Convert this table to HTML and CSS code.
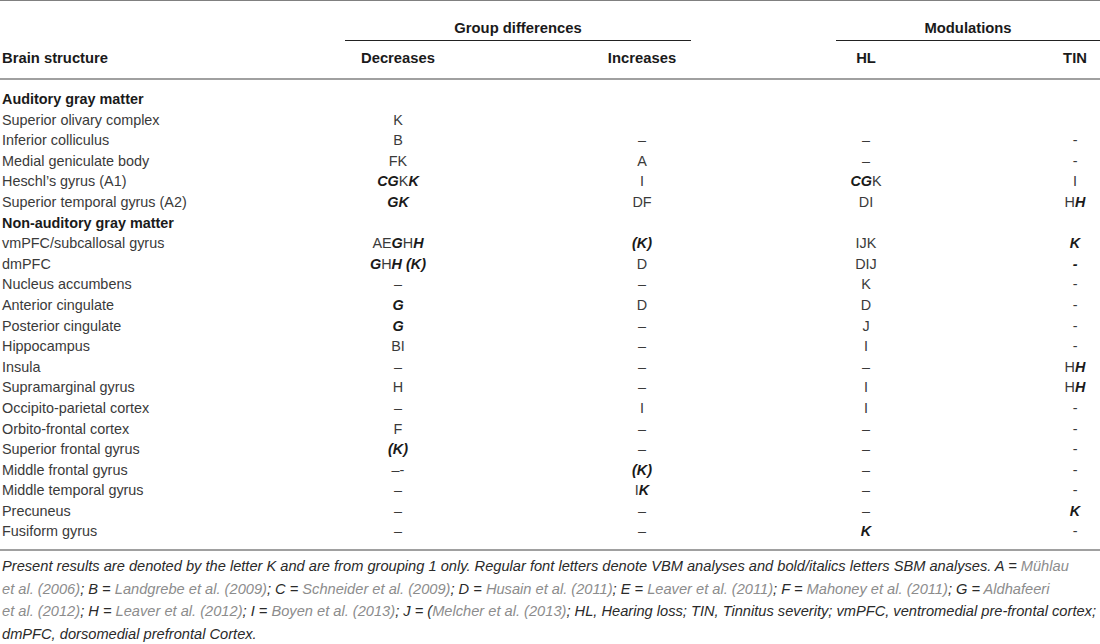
FILE: index.html
```html
<!DOCTYPE html>
<html lang="en">
<head>
    <meta charset="UTF-8">
    <title>Brain structure table</title>
    <link rel="stylesheet" href="styles.css">
</head>
<body>
    <table class="data">
        <colgroup>
            <col class="c-name">
            <col class="c-dec">
            <col class="c-inc">
            <col class="c-hl">
            <col class="c-tin">
        </colgroup>
        <thead>
            <tr class="group-row">
                <th></th>
                <th colspan="2" class="group"><div class="span-line">Group differences</div></th>
                <th colspan="2" class="group mod"><div class="span-line">Modulations</div></th>
            </tr>
            <tr class="head-row">
                <th class="name">Brain structure</th>
                <th class="dec">Decreases</th>
                <th class="inc">Increases</th>
                <th class="hl">HL</th>
                <th class="tin">TIN</th>
            </tr>
        </thead>
        <tbody>
            <tr class="section first"><td colspan="5">Auditory gray matter</td></tr>
            <tr><td>Superior olivary complex</td><td class="dec">K</td><td class="inc"></td><td class="hl"></td><td class="tin"></td></tr>
            <tr><td>Inferior colliculus</td><td class="dec">B</td><td class="inc">–</td><td class="hl">–</td><td class="tin">-</td></tr>
            <tr><td>Medial geniculate body</td><td class="dec">FK</td><td class="inc">A</td><td class="hl">–</td><td class="tin">-</td></tr>
            <tr><td>Heschl’s gyrus (A1)</td><td class="dec"><b>CG</b>K<b>K</b></td><td class="inc">I</td><td class="hl"><b>CG</b>K</td><td class="tin">I</td></tr>
            <tr><td>Superior temporal gyrus (A2)</td><td class="dec"><b>GK</b></td><td class="inc">DF</td><td class="hl">DI</td><td class="tin">H<b>H</b></td></tr>
            <tr class="section"><td colspan="5">Non-auditory gray matter</td></tr>
            <tr><td>vmPFC/subcallosal gyrus</td><td class="dec">AE<b>G</b>H<b>H</b></td><td class="inc"><b>(K)</b></td><td class="hl">IJK</td><td class="tin"><b>K</b></td></tr>
            <tr><td>dmPFC</td><td class="dec"><b>G</b>H<b>H (K)</b></td><td class="inc">D</td><td class="hl">DIJ</td><td class="tin"><strong>-</strong></td></tr>
            <tr><td>Nucleus accumbens</td><td class="dec">–</td><td class="inc">–</td><td class="hl">K</td><td class="tin">-</td></tr>
            <tr><td>Anterior cingulate</td><td class="dec"><b>G</b></td><td class="inc">D</td><td class="hl">D</td><td class="tin">-</td></tr>
            <tr><td>Posterior cingulate</td><td class="dec"><b>G</b></td><td class="inc">–</td><td class="hl">J</td><td class="tin">-</td></tr>
            <tr><td>Hippocampus</td><td class="dec">BI</td><td class="inc">–</td><td class="hl">I</td><td class="tin">-</td></tr>
            <tr><td>Insula</td><td class="dec">–</td><td class="inc">–</td><td class="hl">–</td><td class="tin">H<b>H</b></td></tr>
            <tr><td>Supramarginal gyrus</td><td class="dec">H</td><td class="inc">–</td><td class="hl">I</td><td class="tin">H<b>H</b></td></tr>
            <tr><td>Occipito-parietal cortex</td><td class="dec">–</td><td class="inc">I</td><td class="hl">I</td><td class="tin">-</td></tr>
            <tr><td>Orbito-frontal cortex</td><td class="dec">F</td><td class="inc">–</td><td class="hl">–</td><td class="tin">-</td></tr>
            <tr><td>Superior frontal gyrus</td><td class="dec"><b>(K)</b></td><td class="inc">–</td><td class="hl">–</td><td class="tin">-</td></tr>
            <tr><td>Middle frontal gyrus</td><td class="dec">–-</td><td class="inc"><b>(K)</b></td><td class="hl">–</td><td class="tin">-</td></tr>
            <tr><td>Middle temporal gyrus</td><td class="dec">–</td><td class="inc">I<b>K</b></td><td class="hl">–</td><td class="tin">-</td></tr>
            <tr><td>Precuneus</td><td class="dec">–</td><td class="inc">–</td><td class="hl">–</td><td class="tin"><b>K</b></td></tr>
            <tr class="last"><td>Fusiform gyrus</td><td class="dec">–</td><td class="inc">–</td><td class="hl"><b>K</b></td><td class="tin">-</td></tr>
        </tbody>
    </table>

    <p class="note">Present results are denoted by the letter K and are from grouping 1 only. Regular font letters denote VBM analyses and bold/italics letters SBM analyses. A = <span class="ref">Mühlau<br>et al. (2006)</span>; B = <span class="ref">Landgrebe et al. (2009)</span>; C = <span class="ref">Schneider et al. (2009)</span>; D = <span class="ref">Husain et al. (2011)</span>; E = <span class="ref">Leaver et al. (2011)</span>; F = <span class="ref">Mahoney et al. (2011)</span>; G = <span class="ref">Aldhafeeri<br>et al. (2012)</span>; H = <span class="ref">Leaver et al. (2012)</span>; I = <span class="ref">Boyen et al. (2013)</span>; J = (<span class="ref">Melcher et al. (2013)</span>; HL, Hearing loss; TIN, Tinnitus severity; vmPFC, ventromedial pre-frontal cortex;<br>dmPFC, dorsomedial prefrontal Cortex.</p>
</body>
</html>
```

FILE: styles.css
```css
body {
    margin: 0;
    background: #fff;
    font-family: "Liberation Sans", Arial, sans-serif;
    color: #3a3a3a;
}

.data {
    width: 1100px;
    border-collapse: collapse;
    table-layout: fixed;
    border-top: 1px solid #808080;
    border-bottom: 2px solid #a0a0a0;
    font-size: 14.4px;
}

.c-name { width: 345px; }
.c-dec { width: 106px; }
.c-inc { width: 240px; }
.c-hl { width: 205px; }
.c-tin { width: 204px; }

th, td {
    padding: 0;
    font-weight: normal;
}

thead th {
    font-weight: bold;
    color: #1a1a1a;
    font-size: 14.8px;
}

/* first header row, with the spanning lines */
.group-row th {
    padding-top: 19px;
    text-align: center;
}

.group.mod {
    padding-left: 145px;
}

.span-line {
    line-height: 17px;
    padding-bottom: 3px;
    border-bottom: 1px solid #222;
}

.head-row th {
    line-height: 17px;
    padding-top: 9px;
    padding-bottom: 11px;
    border-bottom: 2px solid #a0a0a0;
}

.head-row .name {
    text-align: left;
    padding-left: 2px;
}

tbody td {
    line-height: 20.6px;
}

tbody td:first-child {
    padding-left: 2px;
}

.dec, .inc, .hl, .tin {
    text-align: center;
}

.inc { padding-left: 142px; }
.hl { padding-left: 145px; }
.tin { padding-left: 154px; }

.section td {
    font-weight: bold;
    color: #1a1a1a;
}

.first td {
    padding-top: 9px;
}

.last td {
    padding-bottom: 7px;
}

td b, td strong {
    font-weight: bold;
    font-style: italic;
    color: #1a1a1a;
}

.note {
    margin: 0;
    padding: 4px 0 0 2px;
    font-size: 14.65px;
    line-height: 22.7px;
    font-style: italic;
    color: #2a2a2a;
}

.note .ref {
    color: #8c8c8c;
}
```
